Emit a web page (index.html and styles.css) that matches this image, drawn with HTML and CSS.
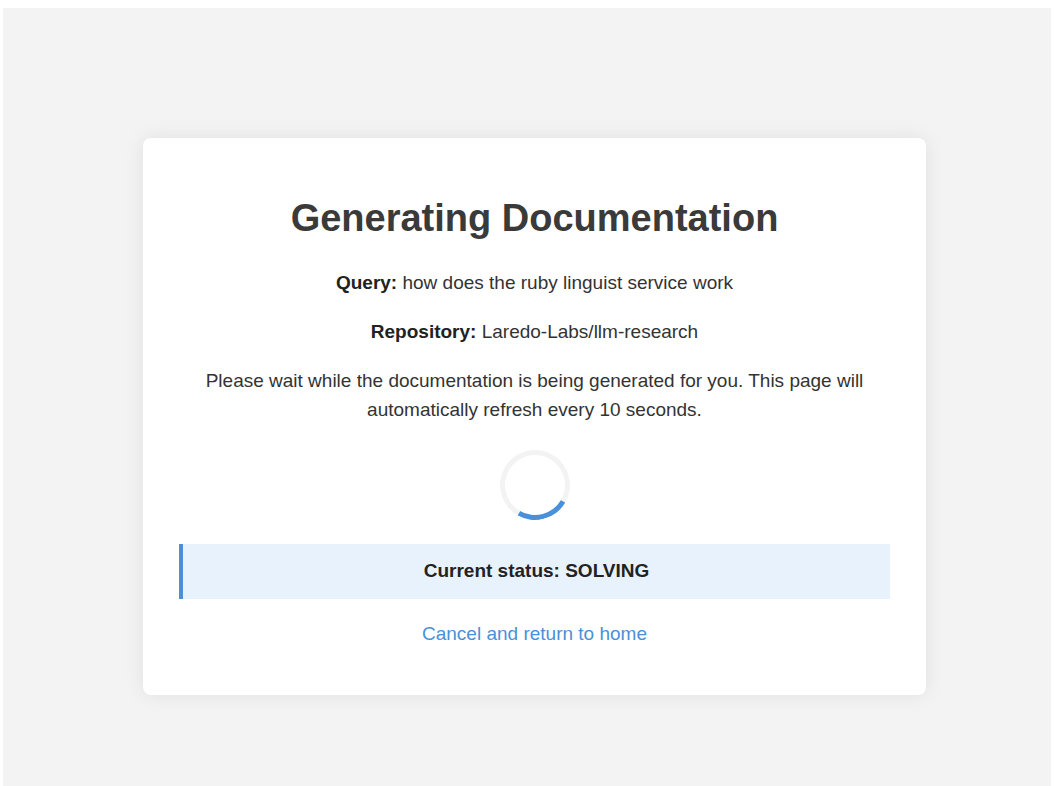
FILE: index.html
```html
<!DOCTYPE html>
<html lang="en">
    <head>
        <meta charset="UTF-8">
        <meta name="viewport" content="width=device-width, initial-scale=1.0">
        <title>Generating Documentation</title>
        <link rel="stylesheet" href="styles.css">
    </head>
<body>
  <div class="frame">
    <div class="card">
      <h1>Generating Documentation</h1>
      <p><strong>Query:</strong> how does the ruby linguist service work</p>
      <p><strong>Repository:</strong> Laredo-Labs/llm-research</p>
      <p>Please wait while the documentation is being generated for you. This page will automatically refresh every 10 seconds.</p>

      <div class="spinner"></div>

      <div class="status">Current status: SOLVING</div>

      <p class="back"><a href="/">Cancel and return to home</a></p>
    </div>
  </div>
</body>
</html>
```

FILE: styles.css
```css
*{
    margin: 0;
    padding: 0;
    box-sizing: border-box;
}

body{
    background-color: #fff;
    font-family: "Liberation Sans", Arial, sans-serif;
    color: #333;
}

.frame{
    margin: 8px 3px 0 3px;
    height: 778px;
    background-color: #f3f3f3;
    padding: 130px 125px 0 140px;
}

.card{
    background-color: #fff;
    border-radius: 8px;
    box-shadow: 0 0 20px rgba(0,0,0,0.08);
    padding: 40px 36px 27px;
    text-align: center;
}

h1{
    font-size: 38px;
    color: #3a3a3a;
    margin: 19px 0 28px;
}

p{
    font-size: 19px;
    line-height: 1.53;
    margin: 20px 0;
}

strong{
    color: #222;
}

.spinner{
    width: 70px;
    height: 70px;
    margin: 26px auto 24px;
    border: 5px solid #f3f3f3;
    border-top-color: #4a90d9;
    border-radius: 50%;
    transform: rotate(165deg);
}

.status{
    background-color: #e8f2fc;
    border-left: 4px solid #4a90d9;
    padding: 13px;
    font-size: 19px;
    line-height: 1.5;
    font-weight: bold;
    color: #222;
}

.back a{
    color: #4a90d9;
    text-decoration: none;
}
```
